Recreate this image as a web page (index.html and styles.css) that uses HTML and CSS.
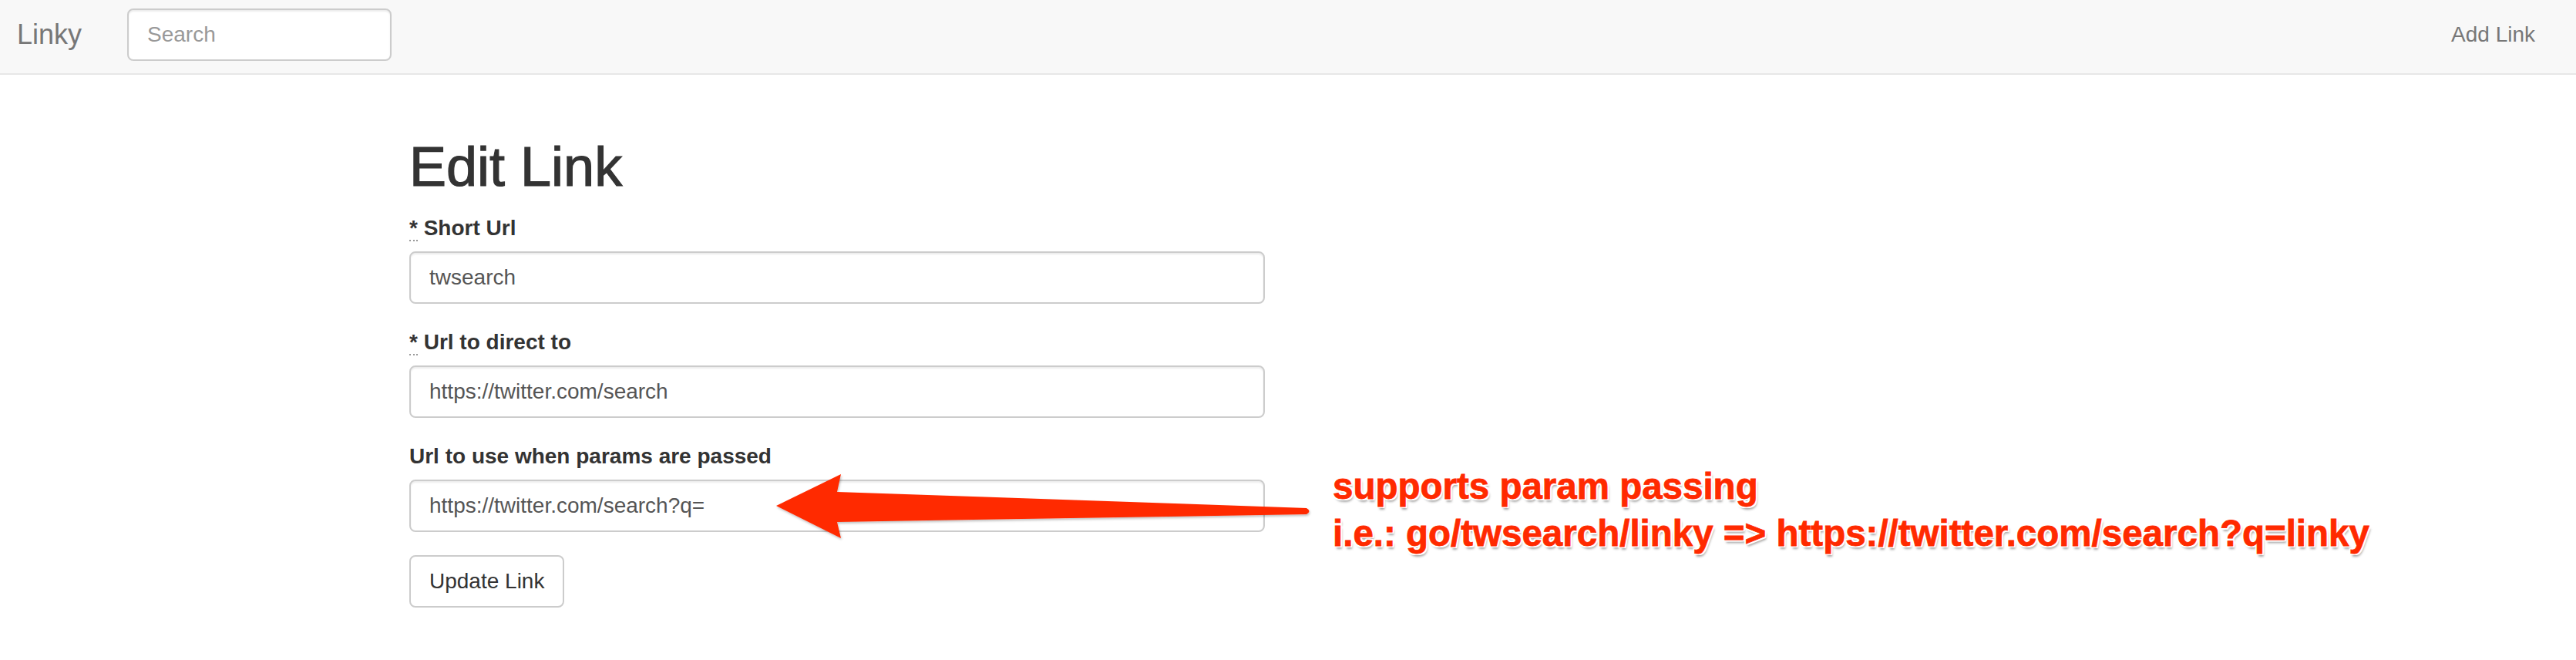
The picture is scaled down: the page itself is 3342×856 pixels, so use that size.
FILE: index.html
```html
<!DOCTYPE html>
<html lang="en">
<head>
<meta charset="utf-8">
<title>Linky - Edit Link</title>
<link rel="stylesheet" href="styles.css">
</head>
<body>
<nav class="navbar">
  <div class="nav-left">
    <a class="brand" href="#">Linky</a>
    <form class="nav-search">
      <input class="search-input" type="text" placeholder="Search">
    </form>
  </div>
  <a class="nav-link" href="#">Add Link</a>
</nav>

<main class="container">
  <h1 class="title">Edit Link</h1>
  <form class="edit-form">
    <div class="form-group">
      <label class="form-label"><abbr class="req" title="required">*</abbr> Short Url</label>
      <input class="form-control" type="text" value="twsearch">
    </div>
    <div class="form-group">
      <label class="form-label"><abbr class="req" title="required">*</abbr> Url to direct to</label>
      <input class="form-control" type="text" value="https://twitter.com/search">
    </div>
    <div class="form-group">
      <label class="form-label">Url to use when params are passed</label>
      <input class="form-control" type="text" value="https://twitter.com/search?q=">
    </div>
    <button class="btn" type="button">Update Link</button>
  </form>
</main>

<div class="annotation">
  <svg class="arrow" width="3342" height="856" viewBox="0 0 3342 856" xmlns="http://www.w3.org/2000/svg">
    <defs>
      <filter id="sh" x="-5%" y="-30%" width="110%" height="160%">
        <feDropShadow dx="1" dy="2" stdDeviation="1.5" flood-color="#000" flood-opacity="0.25"/>
      </filter>
    </defs>
    <path filter="url(#sh)" fill="#ff2a00" d="M1007,656 L1091,615 L1086,638 L1695,659 Q1702,663 1695,667 L1086,677 L1091,698 Z"/>
  </svg>
  <div class="note">
    <div>supports param passing</div>
    <div>i.e.: go/twsearch/linky =&gt; https://twitter.com/search?q=linky</div>
  </div>
</div>
</body>
</html>
```
FILE: styles.css
```css
* { box-sizing: border-box; }

html, body {
  margin: 0;
  padding: 0;
  background: #fff;
}

body {
  font-family: "Liberation Sans", Arial, Helvetica, sans-serif;
  font-size: 28px;
  line-height: 40px;
  color: #333;
  width: 3342px;
  height: 856px;
  position: relative;
  overflow: hidden;
}

a { text-decoration: none; }

.navbar {
  height: 97px;
  background: #f8f8f8;
  border-bottom: 2px solid #e7e7e7;
  display: flex;
  align-items: center;
  justify-content: space-between;
  padding: 0 53px 5px 22px;
}

.nav-left {
  display: flex;
  align-items: center;
}

.brand {
  font-size: 36px;
  line-height: 40px;
  color: #777;
  margin-right: 59px;
}

.search-input {
  display: block;
  width: 343px;
  height: 68px;
  padding: 12px 24px;
  font-family: inherit;
  font-size: 28px;
  color: #555;
  background: #fff;
  border: 2px solid #ccc;
  border-radius: 8px;
  box-shadow: inset 0 2px 2px rgba(0,0,0,.075);
  outline: none;
}

.search-input::placeholder { color: #999; }

.nav-link {
  font-size: 28px;
  line-height: 40px;
  color: #777;
}

.container {
  width: 2340px;
  margin: 0 auto;
  padding: 40px 30px 0;
}

.title {
  font-size: 72px;
  font-weight: normal;
  line-height: 79px;
  margin: 40px 0 20px;
  color: #333;
  -webkit-text-stroke: 1.2px #333;
}

.edit-form {
  width: 1110px;
}

.form-group {
  margin-bottom: 30px;
}

.form-label {
  display: inline-block;
  font-weight: bold;
  margin-bottom: 10px;
  color: #333;
}

.req {
  text-decoration: none;
  border-bottom: 2px dotted #999;
  cursor: help;
}

.form-control {
  display: block;
  width: 100%;
  height: 68px;
  padding: 12px 24px;
  font-family: inherit;
  font-size: 28px;
  line-height: 40px;
  color: #555;
  background: #fff;
  border: 2px solid #ccc;
  border-radius: 8px;
  box-shadow: inset 0 2px 2px rgba(0,0,0,.075);
  outline: none;
}

.btn {
  display: inline-block;
  height: 68px;
  padding: 12px 24px;
  font-family: inherit;
  font-size: 28px;
  line-height: 40px;
  color: #333;
  background: #fff;
  border: 2px solid #ccc;
  border-radius: 8px;
}

.annotation {
  position: absolute;
  left: 0;
  top: 0;
  width: 3342px;
  height: 856px;
  pointer-events: none;
}

.arrow {
  position: absolute;
  left: 0;
  top: 0;
}

.note {
  position: absolute;
  left: 1729px;
  top: 600px;
  font-size: 47.5px;
  line-height: 61px;
  font-weight: bold;
  color: #ff2a00;
  white-space: nowrap;
  -webkit-text-stroke: 0.8px #ff2a00;
  text-shadow:
    -2px 0 0 #fff, 2px 0 0 #fff, 0 -2px 0 #fff, 0 2px 0 #fff,
    -2px -2px 0 #fff, 2px -2px 0 #fff, -2px 2px 0 #fff, 2px 2px 0 #fff,
    2px 4px 3px rgba(0,0,0,.35);
}
```
